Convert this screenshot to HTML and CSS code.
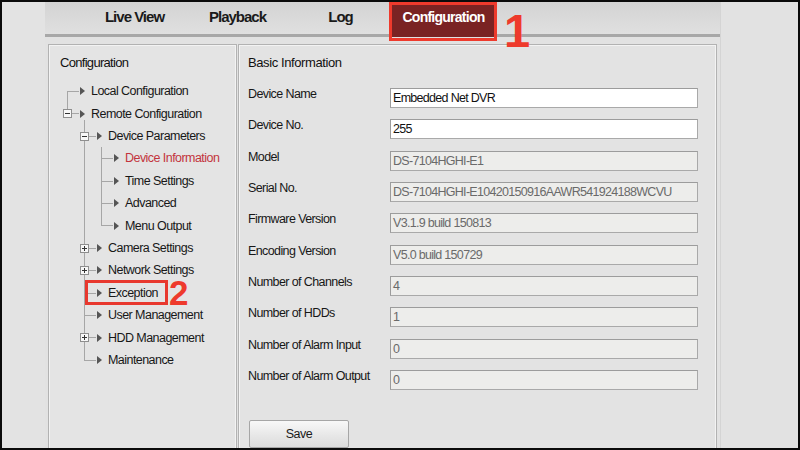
FILE: index.html
```html
<!DOCTYPE html>
<html>
<head>
<meta charset="utf-8">
<link rel="stylesheet" href="styles.css">
</head>
<body>
<div class="screen">
  <div class="gutter-left"></div>
  <div class="main">
    <nav class="nav">
      <div class="nav-item">Live View</div>
      <div class="nav-item">Playback</div>
      <div class="nav-item">Log</div>
      <div class="nav-item active">Configuration</div>
    </nav>
    <div class="frame">
      <aside class="panel tree-panel">
        <h2 class="panel-title title-left">Configuration</h2>
        <ul class="tree">
          <li class="first"><div class="row"><span class="arr"></span>Local Configuration</div></li>
          <li><span class="exp"></span><div class="row"><span class="arr"></span>Remote Configuration</div>
            <ul class="lvl2">
              <li><span class="exp"></span><div class="row"><span class="arr"></span>Device Parameters</div>
                <ul>
                  <li><div class="row current"><span class="arr"></span>Device Information</div></li>
                  <li><div class="row"><span class="arr"></span>Time Settings</div></li>
                  <li><div class="row"><span class="arr"></span>Advanced</div></li>
                  <li><div class="row"><span class="arr"></span>Menu Output</div></li>
                </ul>
              </li>
              <li><span class="exp plus"></span><div class="row"><span class="arr"></span>Camera Settings</div></li>
              <li><span class="exp plus"></span><div class="row"><span class="arr"></span>Network Settings</div></li>
              <li><div class="row"><span class="arr"></span>Exception</div><span class="mark-box"></span><span class="mark-num two">2</span></li>
              <li><div class="row"><span class="arr"></span>User Management</div></li>
              <li><span class="exp plus"></span><div class="row"><span class="arr"></span>HDD Management</div></li>
              <li><div class="row"><span class="arr"></span>Maintenance</div></li>
            </ul>
          </li>
        </ul>
      </aside>
      <section class="panel info-panel">
        <h2 class="panel-title title-right">Basic Information</h2>
        <div class="form">
          <div class="label">Device Name</div><div class="field">Embedded Net DVR</div>
          <div class="label">Device No.</div><div class="field">255</div>
          <div class="label">Model</div><div class="field disabled">DS-7104HGHI-E1</div>
          <div class="label">Serial No.</div><div class="field disabled">DS-7104HGHI-E10420150916AAWR541924188WCVU</div>
          <div class="label">Firmware Version</div><div class="field disabled">V3.1.9 build 150813</div>
          <div class="label">Encoding Version</div><div class="field disabled">V5.0 build 150729</div>
          <div class="label">Number of Channels</div><div class="field disabled">4</div>
          <div class="label">Number of HDDs</div><div class="field disabled">1</div>
          <div class="label">Number of Alarm Input</div><div class="field disabled">0</div>
          <div class="label">Number of Alarm Output</div><div class="field disabled">0</div>
        </div>
        <button class="save">Save</button>
      </section>
    </div>
  </div>
  <div class="gutter-right"></div>
  <span class="tab-mark"></span>
  <span class="mark-num one">1</span>
</div>
</body>
</html>
```
FILE: styles.css
```css
* { box-sizing: border-box; margin: 0; padding: 0; }
html, body { width: 800px; height: 450px; overflow: hidden; }
body { font-family: "Liberation Sans", Arial, sans-serif; background: #000; }

.screen {
  width: 800px; height: 450px;
  border: 2px solid #0b0b0b;
  background: #e1e1e1;
  display: flex;
  position: relative;
  overflow: hidden;
}
.gutter-left { width: 43px; flex: none; background: #e3e3e3; }
.main { width: 675px; flex: none; display: flex; flex-direction: column; }
.gutter-right { flex: 1; background: #e2e2e2; border-left: 1px solid #d4d4d4; }

/* top navigation */
.nav {
  height: 35px; flex: none;
  display: flex;
  padding-left: 38px;
  background: linear-gradient(#d3d3d3, #dadada 55%, #e0e0e0);
  border-bottom: 3px solid #a8a8a8;
}
.nav-item {
  width: 103px;
  text-align: center;
  font-weight: bold;
  font-size: 15px;
  line-height: 30px;
  letter-spacing: -1px;
  color: #1a1a1a;
}
.nav-item.active {
  margin-bottom: -3px;
  background: #7a2323;
  color: #fff;
  font-size: 14px;
  letter-spacing: -0.75px;
}

/* annotations */
.tab-mark {
  position: absolute; left: 387px; top: 0; width: 108px; height: 39px;
  border: 3px solid #ee3a2c;
}
.mark-num {
  position: absolute;
  font-weight: bold;
  color: #ee3a2c;
  line-height: 0.8;
}
.mark-num.one { left: 502px; top: 10px; font-size: 47px; }
.mark-num.two { left: 85px; top: -3px; font-size: 35px; z-index: 2; }
.mark-box {
  position: absolute; left: 1px; top: -2px; width: 83px; height: 25px;
  border: 3px solid #e8382e; z-index: 2;
}

/* frame and panels */
.frame {
  flex: 1;
  display: flex;
  gap: 1px;
  padding: 7px 3px 0 3px;
  background: #e2e2e2;
}
.panel {
  background: #e4e4e4;
  border: 1px solid #b2b2b2;
  border-bottom: none;
  box-shadow: inset 1px 1px 0 #f3f3f3, inset -1px 0 0 #f3f3f3;
}
.tree-panel { width: 189px; flex: none; padding: 10px 0 0 11px; }
.info-panel { flex: 1; padding: 10px 0 0 9px; background: #e3e3e3; }
.panel-title {
  font-weight: normal;
  font-size: 13px;
  line-height: 16px;
  color: #111;
}
.title-left { letter-spacing: -0.7px; }
.title-right { letter-spacing: -0.4px; }

/* tree */
.tree, .tree ul { list-style: none; }
.tree { padding-left: 7px; margin-top: 9px; }
.tree ul { padding-left: 4px; }
.tree li { position: relative; padding-left: 13px; }
.tree li::before {
  content: ""; position: absolute; left: 0; top: 0; bottom: 0;
  border-left: 1px solid #a6a6a6;
}
.tree li:last-child::before { bottom: auto; height: 11px; }
.tree li.first::before { top: 11px; bottom: 0; height: auto; }
.tree .lvl2 > li:first-child::before { top: -5px; }
.tree li::after {
  content: ""; position: absolute; left: 0; top: 11px; width: 12px;
  border-top: 1px solid #a6a6a6;
}
.row {
  display: flex; align-items: center;
  height: 22.42px;
  font-size: 12.5px;
  letter-spacing: -0.55px;
  color: #171717;
  white-space: nowrap;
}
.row.current { color: #c3343d; }
.arr {
  width: 0; height: 0; flex: none;
  border-left: 5px solid #555;
  border-top: 4px solid transparent;
  border-bottom: 4px solid transparent;
  margin-right: 6px;
}
.exp {
  position: absolute; left: -4px; top: 7px; width: 9px; height: 9px;
  border: 1px solid #8e8e8e;
  background: #f7f7f7;
  z-index: 1;
}
.exp::before {
  content: ""; position: absolute; left: 1px; top: 3px; width: 5px; height: 1px;
  background: #333;
}
.exp.plus::after {
  content: ""; position: absolute; left: 3px; top: 1px; width: 1px; height: 5px;
  background: #333;
}

/* form */
.form {
  display: grid;
  grid-template-columns: 142px 308px;
  grid-auto-rows: 31.333px;
  margin-top: 16px;
  align-items: start;
}
.label {
  font-size: 12.5px;
  letter-spacing: -0.6px;
  line-height: 14px;
  color: #171717;
  white-space: nowrap;
}
.field {
  margin-top: 1px;
  height: 20px;
  border: 1px solid #a9a9a9;
  border-top-color: #9c9c9c;
  border-left-color: #9c9c9c;
  background: #fff;
  padding-left: 2px;
  font-size: 12.5px;
  letter-spacing: -0.7px;
  line-height: 18px;
  color: #111;
  white-space: nowrap;
  overflow: hidden;
}
.field.disabled { background: #ededeb; color: #6a6a6a; }

.save {
  display: block;
  margin: 20px 0 0 1px;
  width: 100px; height: 28px;
  border: 1px solid #a6a6a6;
  border-radius: 2px;
  background: linear-gradient(#f8f8f8, #e6e6e6 60%, #dcdcdc);
  font-family: "Liberation Sans", Arial, sans-serif;
  font-size: 12.5px;
  letter-spacing: -0.5px;
  color: #1a1a1a;
}
```
